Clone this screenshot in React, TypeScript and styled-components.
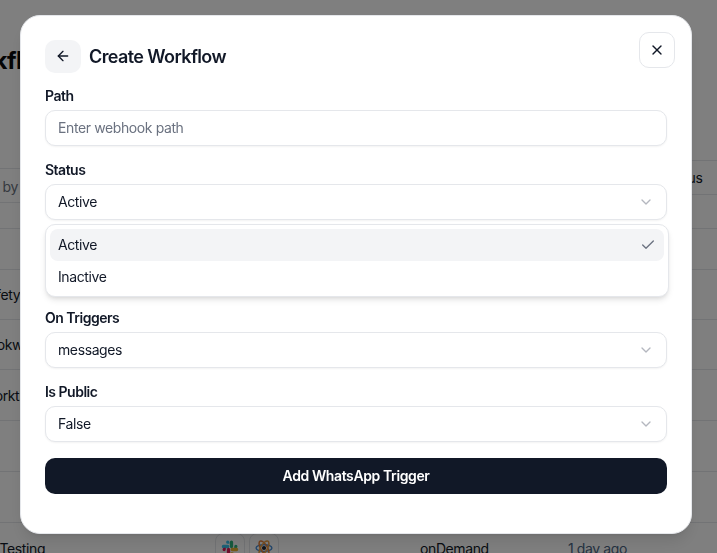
import React from "react";
import styled, { createGlobalStyle } from "styled-components";
import { ArrowLeft, Check, ChevronDown, X } from "lucide-react";

const Global = createGlobalStyle`
  html, body { margin: 0; padding: 0; height: 100%; overflow: hidden; background: #fff; }
  body { font-family: Inter, "Noto Sans", sans-serif; font-size: 14px; letter-spacing: -0.028em; color: #111827; }
  * { box-sizing: border-box; }
`;

const Page = styled.main`
  width: 820px;
  margin-left: -51px;
  padding-top: 45px;
`;
const PageTitle = styled.h1`
  margin: 0 0 83px -3px;
  font-size: 24px;
  line-height: 32px;
  font-weight: 700;
  color: #0a0a0a;
`;
const Toolbar = styled.div`
  display: flex;
  align-items: flex-start;
  gap: 16px;
  margin-bottom: 25px;
`;
const SearchBox = styled.div`
  width: 75px;
  height: 35px;
  margin-top: 8px;
  margin-right: auto;
  display: flex;
  align-items: center;
  justify-content: flex-end;
  padding: 2px 6px 0 0;
  border-top: 1px solid #e5e7eb;
  border-bottom: 1px solid #e5e7eb;
  color: #6b7280;
`;
const StatusFilter = styled.div`
  width: 100px;
  height: 35px;
  margin-right: 48px;
  display: flex;
  align-items: center;
  padding-left: 42px;
  border-top: 1px solid #e5e7eb;
  border-bottom: 1px solid #e5e7eb;
`;
const Table = styled.div`
  border-top: 1px solid #e5e7eb;
`;
const HeaderRow = styled.div`
  height: 41px;
  border-bottom: 1px solid #e5e7eb;
`;
const Row = styled.div<{ $h: number }>`
  height: ${(p) => p.$h}px;
  display: grid;
  grid-template-columns: 257px 205px 148px 1fr;
  align-items: center;
  padding-left: 9px;
  border-bottom: 1px solid #e5e7eb;
`;
const NameCell = styled.div<{ $indent: number }>`
  padding-left: ${(p) => p.$indent}px;
  white-space: nowrap;
`;
const IconGroup = styled.div`
  display: flex;
  gap: 4px;
`;
const IconTile = styled.div`
  width: 30px;
  height: 30px;
  display: flex;
  align-items: center;
  justify-content: center;
  border: 1px solid #e5e7eb;
  border-radius: 8px;
  background: #fff;
`;
const MutedCell = styled.div`
  color: #4b6584;
`;

const Overlay = styled.div`
  position: fixed;
  inset: 0;
  display: flex;
  align-items: flex-start;
  padding: 15px 0 0 20px;
  background: rgba(0, 0, 0, 0.5);
`;
const Modal = styled.section`
  position: relative;
  width: 672px;
  height: 519px;
  padding: 24px 24px 40px;
  background: #fff;
  border: 1px solid #e5e7eb;
  border-radius: 20px;
  box-shadow: 0 10px 15px -3px rgba(0, 0, 0, 0.1), 0 4px 6px -4px rgba(0, 0, 0, 0.1);
`;
const CloseButton = styled.button`
  position: absolute;
  top: 16px;
  right: 16px;
  width: 36px;
  height: 36px;
  display: flex;
  align-items: center;
  justify-content: center;
  padding: 0;
  background: #fff;
  border: 1px solid #e5e7eb;
  border-radius: 10px;
  color: #111827;
`;
const Header = styled.header`
  display: flex;
  align-items: center;
  gap: 8px;
  margin-bottom: 12px;
`;
const BackButton = styled.button`
  width: 36px;
  height: 33px;
  display: flex;
  align-items: center;
  justify-content: center;
  padding: 0 0 1px;
  background: #f3f4f6;
  border: none;
  border-radius: 10px;
  color: #111827;
`;
const ModalTitle = styled.h2`
  margin: 0;
  font-size: 18px;
  line-height: 33px;
  font-weight: 600;
  letter-spacing: -0.034em;
  color: #111827;
`;
const Form = styled.form`
  display: flex;
  flex-direction: column;
  gap: 13px;
`;
const Field = styled.div`
  position: relative;
  display: flex;
  flex-direction: column;
  gap: 3px;
`;
const Slot = styled.div`
  height: 61px;
`;
const Label = styled.label`
  font-size: 14px;
  line-height: 22px;
  font-weight: 600;
  letter-spacing: -0.036em;
  color: #111827;
`;
const TextInput = styled.input`
  height: 36px;
  width: 100%;
  padding: 0 12px 2px;
  font: inherit;
  letter-spacing: inherit;
  color: #111827;
  background: #fff;
  border: 1px solid #e5e7eb;
  border-radius: 10px;
  box-shadow: 0 1px 2px rgba(0, 0, 0, 0.05);
  &::placeholder { color: #6b7280; }
`;
const SelectTrigger = styled.button`
  height: 36px;
  width: 100%;
  display: flex;
  align-items: center;
  justify-content: space-between;
  padding: 0 12px 2px;
  font: inherit;
  letter-spacing: inherit;
  color: #111827;
  background: #fff;
  border: 1px solid #e5e7eb;
  border-radius: 10px;
  box-shadow: 0 1px 2px rgba(0, 0, 0, 0.05);
  svg { color: #6b7280; opacity: 0.5; transform: translateY(1px); }
`;
const Popup = styled.div`
  position: absolute;
  top: 65px;
  left: 0;
  width: 624px;
  height: 73px;
  padding: 4px;
  background: #fff;
  border: 1px solid #e5e7eb;
  border-radius: 10px;
  box-shadow: 0 4px 6px -1px rgba(0, 0, 0, 0.1), 0 2px 4px -2px rgba(0, 0, 0, 0.1);
  z-index: 2;
`;
const Option = styled.div<{ $active?: boolean }>`
  height: 32px;
  display: flex;
  align-items: center;
  justify-content: space-between;
  padding: 0 8px 2px;
  border-radius: 8px;
  background: ${(p) => (p.$active ? "#f3f4f6" : "transparent")};
  color: #111827;
  svg { color: #6b7280; transform: translateY(1px); }
`;
const SubmitButton = styled.button`
  height: 36px;
  width: 100%;
  margin-top: 3px;
  padding: 0 0 2px;
  font: inherit;
  font-weight: 600;
  letter-spacing: inherit;
  color: #fff;
  background: #111827;
  border: none;
  border-radius: 10px;
`;

const SlackLogo = () => (
  <svg width="18" height="18" viewBox="0 0 24 24" aria-hidden="true">
    <path fill="#36C5F0" d="M9 2a2.2 2.2 0 1 0 0 4.4h2.2V4.2A2.2 2.2 0 0 0 9 2zm0 5.8H3.2a2.2 2.2 0 1 0 0 4.4H9a2.2 2.2 0 1 0 0-4.4z" />
    <path fill="#2EB67D" d="M22 10a2.2 2.2 0 1 0-4.4 0v2.2h2.2A2.2 2.2 0 0 0 22 10zm-5.8 0V4.2a2.2 2.2 0 1 0-4.4 0V10a2.2 2.2 0 1 0 4.4 0z" />
    <path fill="#ECB22E" d="M15 22a2.2 2.2 0 1 0 0-4.4h-2.2v2.2A2.2 2.2 0 0 0 15 22zm0-5.8h5.8a2.2 2.2 0 1 0 0-4.4H15a2.2 2.2 0 1 0 0 4.4z" />
    <path fill="#E01E5A" d="M2 14a2.2 2.2 0 1 0 4.4 0v-2.2H4.2A2.2 2.2 0 0 0 2 14zm5.8 0v5.8a2.2 2.2 0 1 0 4.4 0V14a2.2 2.2 0 1 0-4.4 0z" />
  </svg>
);
const AtomLogo = () => (
  <svg width="18" height="18" viewBox="0 0 24 24" fill="none" aria-hidden="true">
    <ellipse cx="12" cy="12" rx="10.5" ry="4.5" stroke="#4a90d9" strokeWidth="2" />
    <ellipse cx="12" cy="12" rx="10.5" ry="4.5" stroke="#e8833a" strokeWidth="2" transform="rotate(60 12 12)" />
    <ellipse cx="12" cy="12" rx="10.5" ry="4.5" stroke="#f0a040" strokeWidth="2" transform="rotate(120 12 12)" />
    <circle cx="12" cy="12" r="2.8" fill="#1f2937" />
  </svg>
);

export default function App() {
  return (
    <>
      <Global />
      <Page>
        <PageTitle>Workflows</PageTitle>
        <Toolbar>
          <SearchBox>Search by</SearchBox>
          <StatusFilter>Status</StatusFilter>
        </Toolbar>
        <Table>
          <HeaderRow />
          <Row $h={50}><NameCell $indent={22}>Safety</NameCell></Row>
          <Row $h={50}><NameCell $indent={22}>Bookworm</NameCell></Row>
          <Row $h={51}><NameCell $indent={24}>Worktime</NameCell></Row>
          <Row $h={51} />
          <Row $h={51} />
          <Row $h={51}>
            <NameCell $indent={4}>Slack Testing</NameCell>
            <IconGroup>
              <IconTile><SlackLogo /></IconTile>
              <IconTile><AtomLogo /></IconTile>
            </IconGroup>
            <div>onDemand</div>
            <MutedCell>1 day ago</MutedCell>
          </Row>
        </Table>
      </Page>
      <Overlay>
        <Modal>
          <CloseButton type="button" aria-label="Close"><X size={16} /></CloseButton>
          <Header>
            <BackButton type="button" aria-label="Back"><ArrowLeft size={16} /></BackButton>
            <ModalTitle>Create Workflow</ModalTitle>
          </Header>
          <Form>
            <Field>
              <Label>Path</Label>
              <TextInput placeholder="Enter webhook path" />
            </Field>
            <Field>
              <Label>Status</Label>
              <SelectTrigger type="button">Active<ChevronDown size={16} /></SelectTrigger>
              <Popup>
                <Option $active>Active<Check size={16} /></Option>
                <Option>Inactive</Option>
              </Popup>
            </Field>
            <Slot />
            <Field>
              <Label>On Triggers</Label>
              <SelectTrigger type="button">messages<ChevronDown size={16} /></SelectTrigger>
            </Field>
            <Field>
              <Label>Is Public</Label>
              <SelectTrigger type="button">False<ChevronDown size={16} /></SelectTrigger>
            </Field>
            <SubmitButton type="button">Add WhatsApp Trigger</SubmitButton>
          </Form>
        </Modal>
      </Overlay>
    </>
  );
}
